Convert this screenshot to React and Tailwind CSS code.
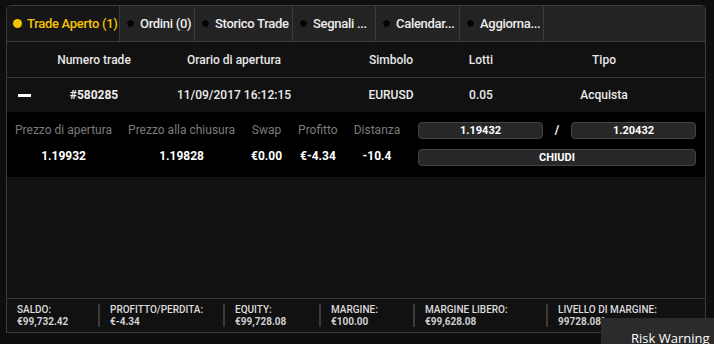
import React from 'react';

const tabs = [
  { label: 'Trade Aperto (1)', w: 'w-[113px]', active: true },
  { label: 'Ordini (0)', w: 'w-[75px]' },
  { label: 'Storico Trade', w: 'w-[98px]' },
  { label: 'Segnali ...', w: 'w-[83px]' },
  { label: 'Calendar...', w: 'w-[84px]' },
  { label: 'Aggiorna...', w: 'w-[84px]' },
];

const cols = ['w-[40px]', 'w-[94px]', 'w-[186px]', 'w-[128px]', 'w-[52px]', 'w-[194px]'];

const details = [
  { label: 'Prezzo di apertura', value: '1.19932' },
  { label: 'Prezzo alla chiusura', value: '1.19828' },
  { label: 'Swap', value: '€0.00' },
  { label: 'Profitto', value: '€-4.34' },
  { label: 'Distanza', value: '-10.4' },
];

const footer = [
  { label: 'SALDO:', value: '€99,732.42', w: 'w-[93px]' },
  { label: 'PROFITTO/PERDITA:', value: '€-4.34', w: 'w-[125px]' },
  { label: 'EQUITY:', value: '€99,728.08', w: 'w-[96px]' },
  { label: 'MARGINE:', value: '€100.00', w: 'w-[94px]' },
  { label: 'MARGINE LIBERO:', value: '€99,628.08', w: 'w-[133px]' },
  { label: 'LIVELLO DI MARGINE:', value: '99728.08%', w: 'flex-1' },
];

export default function App() {
  return (
    <div className="relative w-[714px] h-[344px] overflow-hidden bg-[#0f0e0f] pt-[5px] pl-[6px] font-['Roboto',sans-serif]">
      <div className="w-[700px] h-[328px] flex flex-col border border-[#3c3c3c] rounded-t-[5px] bg-[#121112] overflow-hidden">
        {/* Tabs */}
        <div className="flex h-[36px] bg-[#232323] border-b border-[#3c3c3c] shrink-0">
          {tabs.map((t) => (
            <div
              key={t.label}
              className={`${t.w} flex items-center gap-[5px] pl-[6px] border-r border-[#3a3a3a] text-[13px] font-medium tracking-[-0.3px] ${
                t.active ? 'bg-[#161616] text-[#f5c300]' : 'text-[#ececec]'
              }`}
            >
              <span
                className={`shrink-0 w-[9px] h-[9px] rounded-full ${t.active ? 'bg-[#f5c300]' : 'bg-[#030303] border border-[#2c2c2c]'}`}
              ></span>
              <span className="whitespace-nowrap">{t.label}</span>
            </div>
          ))}
        </div>

        {/* Header */}
        <div className="flex h-[36px] items-center border-b border-[#3a3a3a] text-[12px] font-medium text-[#e6e6e6] shrink-0">
          <div className={cols[0]}></div>
          <div className={`${cols[1]} text-center`}>Numero trade</div>
          <div className={`${cols[2]} text-center`}>Orario di apertura</div>
          <div className={`${cols[3]} text-center`}>Simbolo</div>
          <div className={`${cols[4]} text-center`}>Lotti</div>
          <div className={`${cols[5]} text-center`}>Tipo</div>
        </div>

        {/* Row */}
        <div className="flex h-[34px] items-center text-[12px] font-medium text-[#ececec] shrink-0">
          <div className={`${cols[0]} flex pl-[11px]`}>
            <span className="w-[13px] h-[3px] bg-white"></span>
          </div>
          <div className={`${cols[1]} text-center font-bold`}>#580285</div>
          <div className={`${cols[2]} text-center`}>11/09/2017 16:12:15</div>
          <div className={`${cols[3]} text-center`}>EURUSD</div>
          <div className={`${cols[4]} text-center`}>0.05</div>
          <div className={`${cols[5]} text-center`}>Acquista</div>
        </div>

        {/* Details */}
        <div className="flex h-[65px] bg-black shrink-0">
          <div className="flex pt-[9px]">
            {details.map((d) => (
              <div key={d.label} className="flex flex-col items-center px-[8px]">
                <span className="text-[12px] text-[#7b7b7b] whitespace-nowrap">{d.label}</span>
                <span className="mt-[8px] text-[12px] font-bold text-white whitespace-nowrap">{d.value}</span>
              </div>
            ))}
          </div>
          <div className="ml-auto mr-[9px] pt-[9px] w-[278px] flex flex-col gap-[10px]">
            <div className="flex items-center">
              <button className="w-[125px] h-[17px] rounded-[4px] bg-[#272727] border border-[#444] text-[11px] font-bold text-white leading-none">
                1.19432
              </button>
              <span className="flex-1 text-center text-[12px] font-bold text-white">/</span>
              <button className="w-[125px] h-[17px] rounded-[4px] bg-[#272727] border border-[#444] text-[11px] font-bold text-white leading-none">
                1.20432
              </button>
            </div>
            <button className="w-full h-[17px] rounded-[4px] bg-[#272727] border border-[#444] text-[11px] font-bold text-white leading-none">
              CHIUDI
            </button>
          </div>
        </div>

        <div className="flex-1"></div>

        {/* Footer */}
        <div className="flex h-[34px] border-t border-[#3a3a3a] items-center shrink-0">
          {footer.map((f, i) => (
            <div
              key={f.label}
              className={`${f.w} h-[23px] flex flex-col justify-center pl-[10px] ${
                i < footer.length - 1 ? 'border-r-[2px] border-[#3a3a3a]' : ''
              }`}
            >
              <span className="text-[10px] leading-[11px] font-medium text-[#dcdcdc] whitespace-nowrap">{f.label}</span>
              <span className="text-[10px] leading-[13px] font-bold text-[#cfcfcf] whitespace-nowrap">{f.value}</span>
            </div>
          ))}
        </div>
      </div>

      {/* Risk warning overlay */}
      <div className="absolute left-[601px] top-[318px] w-[140px] h-[40px] bg-[#2b2b2b] pl-[30px] pt-[11px] text-[13px] text-white font-['Open_Sans',sans-serif]">
        Risk Warning
      </div>
    </div>
  );
}
